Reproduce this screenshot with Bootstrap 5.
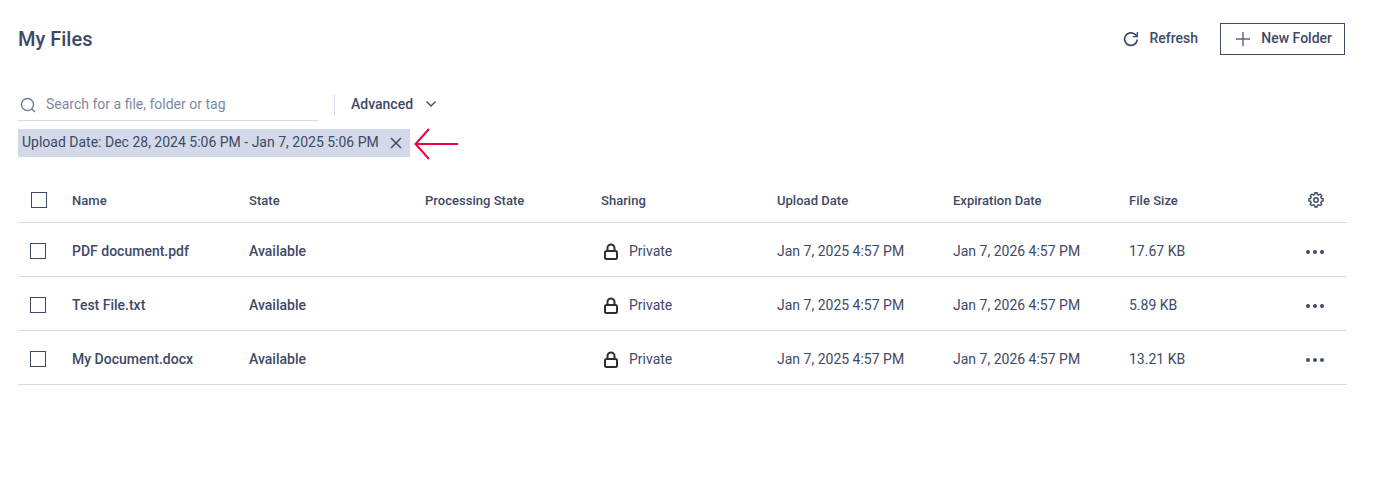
<!DOCTYPE html>
<html lang="en">
<head>
  <meta charset="UTF-8" />
  <meta name="viewport" content="width=device-width, initial-scale=1.0" />
  <title>My Files</title>
  <link href="https://cdn.jsdelivr.net/npm/bootstrap@5.3.0/dist/css/bootstrap.min.css" rel="stylesheet" />
  <style>
    body {
      background-color: #fff;
      font-family: Roboto, sans-serif;
      font-size: 14px;
      color: #3e4a66;
    }
    .page-wrap {
      padding: 0 40px 0 18px;
    }
    .top-bar {
      height: 78px;
      padding-right: 2px;
    }
    .page-title {
      font-size: 20px;
      font-weight: 500;
      color: #3e4a66;
      margin: 0;
    }
    .btn-refresh, .btn-new {
      font-size: 14px;
      font-weight: 500;
      color: #3e4a66;
      border-radius: 0;
    }
    .btn-refresh {
      border: 0;
      padding: 0 0 2px;
      margin-right: 22px;
    }
    .btn-new {
      border: 1px solid #3e4a66;
      width: 125px;
      height: 32px;
      padding: 0 12px 0 0;
    }
    .new-label {
      margin-left: 11px;
      padding-bottom: 2px;
    }
    .search-row {
      height: 52px;
    }
    .search-box {
      width: 300px;
      height: 34px;
      padding-top: 2px;
      border-bottom: 1px solid #d3d9e8;
      color: #7d88a6;
    }
    .search-input {
      border: 0;
      outline: 0;
      padding: 0;
      width: 250px;
      font-size: 14px;
      background: transparent;
    }
    .search-input::placeholder {
      color: #7d88a6;
      opacity: 1;
    }
    .divider-v {
      width: 1px;
      height: 20px;
      background: #d3d9e8;
      margin: 2px 16px 0;
    }
    .advanced-label {
      font-weight: 500;
      margin-right: 12px;
    }
    .filter-row {
      height: 28px;
      margin-top: -1px;
    }
    .filter-chip {
      background: #d3d9e8;
      height: 28px;
      width: 392px;
      padding-left: 4px;
      padding-right: 8px;
      color: #3e4a66;
    }
    .chip-label {
      padding-bottom: 2px;
    }
    .files-table {
      table-layout: fixed;
      width: 1329px;
      margin: 20px 0 0 0;
      color: #3e4a66;
    }
    .files-table th, .files-table td {
      padding: 0;
      vertical-align: middle;
      border-bottom: 1px solid #d3d9e8;
      font-size: 14px;
      color: #3e4a66;
      background: transparent;
    }
    .files-table th {
      height: 45px;
      padding-top: 2px;
      font-weight: 500;
      font-size: 13px;
      letter-spacing: .03px;
    }
    .files-table th.gear-cell {
      padding-top: 0;
    }
    .files-table td {
      height: 54px;
      padding-top: 4px;
    }
    .files-table tbody td {
      border-bottom-color: #d9d9d9;
    }
    .cell-strong {
      font-weight: 500;
    }
    .check-col { width: 54px; }
    .data-col { width: 176px; }
    .name-col { width: 177px; }
    .check-box {
      display: block;
      width: 16px;
      height: 16px;
      border: 1.5px solid #3e4a66;
      margin-left: 12px;
    }
    th .check-box {
      margin-left: 13px;
    }
    .lock-icon {
      margin-right: 10px;
    }
    .arrow-mark {
      margin: 2px 0 0 4px;
    }
    .end-icon {
      margin-right: 22px;
    }
  </style>
</head>
<body>
  <div class="page-wrap">
    <div class="top-bar d-flex align-items-center justify-content-between">
      <h1 class="page-title">My Files</h1>
      <div class="d-flex align-items-center">
        <button class="btn btn-refresh d-flex align-items-center gap-2">
          <svg width="18" height="18" viewBox="1 -1 18 18" fill="none" stroke="#3e4a66" stroke-width="1.7">
            <path d="M15.2 9.500A6.300 6.300 0 1 1 13 4.300L15.200 6.400" />
            <path d="M15.400 1.900V6.600H10.800" stroke-width="1.400" />
          </svg>
          Refresh
        </button>
        <button class="btn btn-new d-flex align-items-center justify-content-end">
          <svg width="14" height="14" viewBox="0 0 14 14" stroke="#5a6480" stroke-width="1.400">
            <path d="M7 0V14M0 7H14" />
          </svg>
          <span class="new-label">New Folder</span>
        </button>
      </div>
    </div>

    <div class="search-row d-flex align-items-center">
      <div class="search-box d-flex align-items-center gap-2">
        <svg width="20" height="20" viewBox="0 0 20 20" fill="none" stroke="#6f7d9e" stroke-width="1.400">
          <circle cx="9.500" cy="9.500" r="6" />
          <path d="M14 14L17 17" />
        </svg>
        <input class="search-input" type="text" placeholder="Search for a file, folder or tag" />
      </div>
      <span class="divider-v"></span>
      <span class="advanced-label">Advanced</span>
      <svg width="12" height="8" viewBox="0 0 12 8" fill="none" stroke="#3e4a66" stroke-width="1.400">
        <path d="M1.500 1.500L6 6L10.500 1.500" />
      </svg>
    </div>

    <div class="filter-row d-flex align-items-center">
      <div class="filter-chip d-flex align-items-center justify-content-between">
        <span class="chip-label">Upload Date: Dec 28, 2024 5:06 PM - Jan 7, 2025 5:06 PM</span>
        <svg width="12" height="12" viewBox="0 0 12 12" stroke="#3e4a66" stroke-width="1.500">
          <path d="M1 1L11 11M11 1L1 11" />
        </svg>
      </div>
      <svg class="arrow-mark" width="46" height="32" viewBox="0 0 46 32" fill="none" stroke="#f0003c" stroke-width="2">
        <path d="M44 16H1.500" />
        <path d="M15 1L1.500 16L15 31" />
      </svg>
    </div>

    <table class="table files-table">
      <thead>
        <tr>
          <th class="check-col"><span class="check-box"></span></th>
          <th class="name-col">Name</th>
          <th class="data-col">State</th>
          <th class="data-col">Processing State</th>
          <th class="data-col">Sharing</th>
          <th class="data-col">Upload Date</th>
          <th class="data-col">Expiration Date</th>
          <th class="data-col">File Size</th>
          <th class="text-end gear-cell">
            <svg class="end-icon" width="18" height="18" viewBox="0 0 24 24" fill="none" stroke="#3e4a66" stroke-width="2">
              <circle cx="12" cy="12" r="3" />
              <path d="M10.500 3h3l.6 2.500 1.900.8 2.200-1.300 2.100 2.100-1.300 2.200.8 1.900 2.500.6v3l-2.500.6-.8 1.900 1.300 2.200-2.100 2.100-2.200-1.300-1.900.8-.6 2.500h-3l-.6-2.500-1.900-.8-2.200 1.300-2.100-2.100 1.300-2.200-.8-1.900-2.500-.6v-3l2.500-.6.8-1.900L3.800 7.100l2.100-2.100 2.200 1.300 1.900-.8z" transform="translate(12 12) scale(.92) translate(-12 -13.500)" />
            </svg>
          </th>
        </tr>
      </thead>
      <tbody id="fileRows"></tbody>
    </table>
  </div>

  <script>
    const files = [
      ["PDF document.pdf", "17.67 KB"],
      ["Test File.txt", "5.89 KB"],
      ["My Document.docx", "13.21 KB"]
    ];
    document.getElementById("fileRows").innerHTML = files.map(f => `
      <tr>
        <td><span class="check-box"></span></td>
        <td class="cell-strong">${f[0]}</td>
        <td class="cell-strong">Available</td>
        <td></td>
        <td>
          <span class="d-flex align-items-center">
            <svg class="lock-icon" width="18" height="18" viewBox="0 0 18 18" fill="none" stroke="#2f2f33" stroke-width="2">
              <rect x="4" y="9" width="12" height="8" rx="1.500" />
              <path d="M6.500 9V6a3.500 3.500 0 0 1 7 0V9" />
            </svg>
            Private
          </span>
        </td>
        <td>Jan 7, 2025 4:57 PM</td>
        <td>Jan 7, 2026 4:57 PM</td>
        <td>${f[1]}</td>
        <td class="text-end">
          <svg class="end-icon" width="20" height="6" viewBox="0 0 20 6" fill="#3e4a66">
            <circle cx="3" cy="3" r="2" /><circle cx="10" cy="3" r="2" /><circle cx="17" cy="3" r="2" />
          </svg>
        </td>
      </tr>`).join("");
  </script>
  <script src="https://cdn.jsdelivr.net/npm/bootstrap@5.3.0/dist/js/bootstrap.bundle.min.js"></script>
</body>
</html>
